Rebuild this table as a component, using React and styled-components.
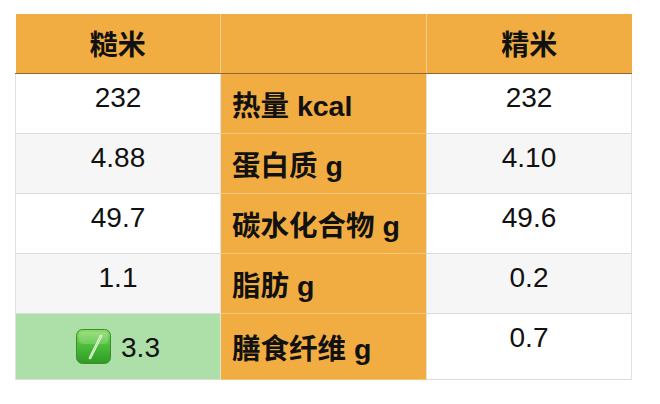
import React from 'react';
import styled, { createGlobalStyle } from 'styled-components';

const GlobalStyle = createGlobalStyle`
  html, body {
    margin: 0;
    padding: 0;
    background: #fff;
  }
  body {
    font-family: "Liberation Sans", "Noto Sans CJK SC", sans-serif;
    color: #111;
  }
`;

const rows = [
  { brown: '232', label: '热量 kcal', white: '232' },
  { brown: '4.88', label: '蛋白质 g', white: '4.10' },
  { brown: '49.7', label: '碳水化合物 g', white: '49.6' },
  { brown: '1.1', label: '脂肪 g', white: '0.2' },
  { brown: '3.3', label: '膳食纤维 g', white: '0.7', win: true },
];

function CheckIcon() {
  return (
    <svg width="35" height="35" viewBox="0 0 35 35">
      <defs>
        <linearGradient id="gbox" x1="0" y1="0" x2="0" y2="1">
          <stop offset="0" stopColor="#8fdc6a" />
          <stop offset="0.45" stopColor="#4cbf3a" />
          <stop offset="1" stopColor="#2f9a26" />
        </linearGradient>
      </defs>
      <rect x="0.5" y="0.5" width="34" height="34" rx="6" fill="url(#gbox)" stroke="#3a8f2c" />
      <rect x="3" y="3" width="29" height="12" rx="4" fill="#ffffff" opacity="0.18" />
      <path d="M25 7 L14 29" stroke="#f2fbe8" strokeWidth="2.6" strokeLinecap="round" />
      <path d="M25 7 L14 29" stroke="#9ad07f" strokeWidth="0.8" strokeLinecap="round" />
    </svg>
  );
}

export default function App() {
  return (
    <>
      <GlobalStyle />
      <Page>
        <Table>
          <colgroup>
            <col style={{ width: 205 }} />
            <col style={{ width: 206 }} />
            <col style={{ width: 205 }} />
          </colgroup>
          <thead>
            <tr>
              <HeadCell>糙米</HeadCell>
              <HeadCell />
              <HeadCell>精米</HeadCell>
            </tr>
          </thead>
          <tbody>
            {rows.map((r, i) => (
              <tr key={r.label}>
                <ValueCell $alt={i % 2 === 1} $win={r.win} $last={i === rows.length - 1}>
                  {r.win ? (
                    <WinValue>
                      <CheckIcon />
                      <span>{r.brown}</span>
                    </WinValue>
                  ) : (
                    r.brown
                  )}
                </ValueCell>
                <LabelCell>{r.label}</LabelCell>
                <ValueCell $alt={i % 2 === 1} $last={i === rows.length - 1}>
                  {r.white}
                </ValueCell>
              </tr>
            ))}
          </tbody>
        </Table>
      </Page>
    </>
  );
}

const Page = styled.div`
  padding: 14px 0 0 15px;
`;

const Table = styled.table`
  border-collapse: collapse;
  table-layout: fixed;
  width: 616px;
  font-size: 28px;
`;

const HeadCell = styled.th`
  height: 59px;
  padding: 0;
  box-sizing: border-box;
  background: #f1ad41;
  font-weight: bold;
  font-size: 28px;
  text-align: center;
  vertical-align: middle;
  border-left: 1px solid #f6d193;
  border-bottom: 1px solid #8d6a34;
  &:first-child {
    border-left: none;
  }
`;

const ValueCell = styled.td`
  height: ${(p) => (p.$last ? 66 : 60)}px;
  padding: 8px 0 0;
  box-sizing: border-box;
  text-align: center;
  vertical-align: top;
  background: ${(p) => (p.$win ? '#addfa9' : p.$alt ? '#f6f6f6' : '#fff')};
  border-bottom: 1px solid #dcdcdc;
  border-left: 1px solid #e2e2e2;
  border-right: 1px solid #e2e2e2;
`;

const WinValue = styled.div`
  display: flex;
  align-items: center;
  justify-content: center;
  gap: 10px;
  margin-top: 7px;
  span {
    padding-top: 3px;
  }
`;

const LabelCell = styled.td`
  padding: 0 0 0 11px;
  box-sizing: border-box;
  background: #f1ad41;
  font-weight: bold;
  font-size: 28.5px;
  text-align: left;
  vertical-align: middle;
  border-bottom: 1px solid #f5c77a;
  white-space: nowrap;
`;
